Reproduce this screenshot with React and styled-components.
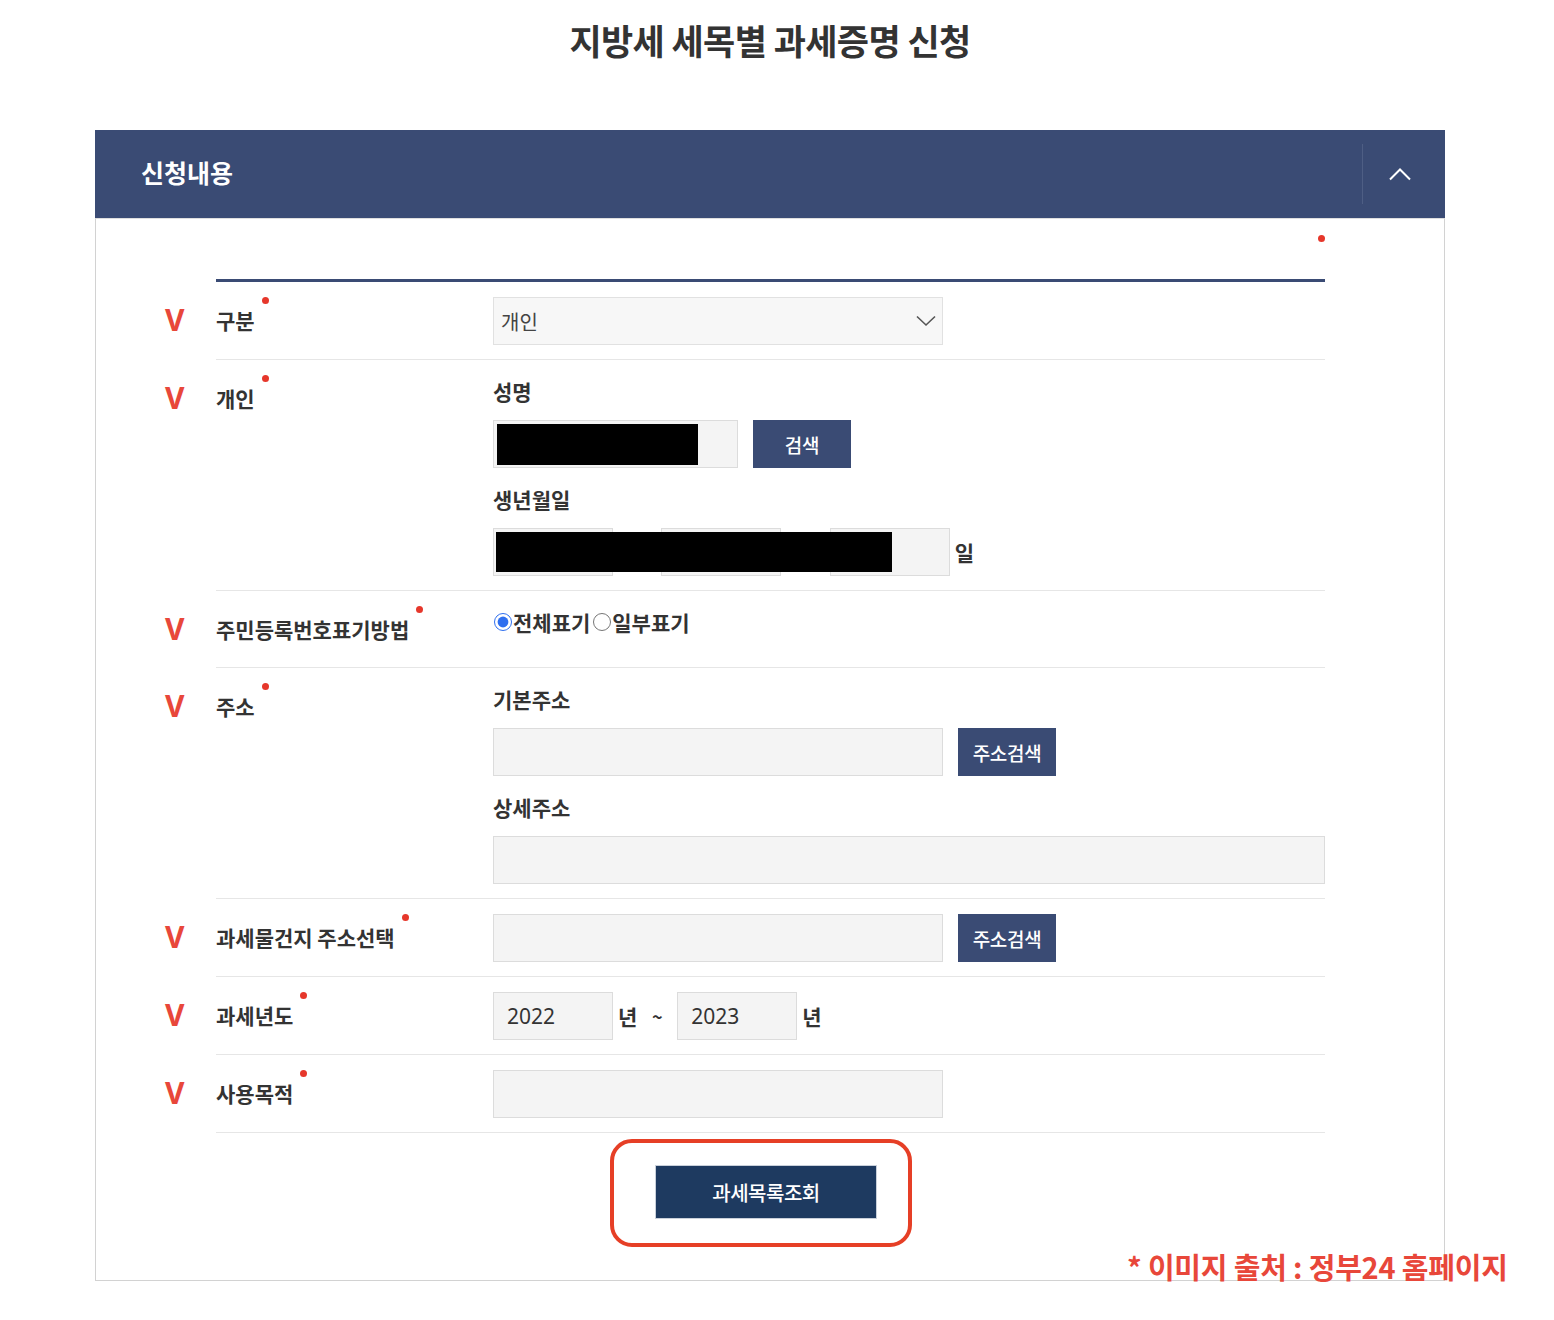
import React from "react";
import styled, { createGlobalStyle } from "styled-components";

const Global = createGlobalStyle`
  html, body { margin: 0; padding: 0; background: #fff; }
  body { font-family: "Noto Sans CJK KR", "Noto Sans", sans-serif; color: #333; }
  * { box-sizing: border-box; }
`;

const Page = styled.div`
  position: relative;
  width: 1554px;
  height: 1320px;
  padding: 18px 0 0 95px;
`;

const Container = styled.div`
  width: 1350px;
`;

const Title = styled.h1`
  margin: 0;
  font-size: 35px;
  line-height: 44px;
  font-weight: 700;
  letter-spacing: -0.6px;
  color: #333;
  text-align: center;
`;

const Panel = styled.section`
  margin-top: 68px;
`;

const Header = styled.div`
  height: 88px;
  background: #3a4b74;
  display: flex;
  align-items: center;
  justify-content: space-between;
  padding-left: 46px;
`;

const HeaderTitle = styled.h2`
  margin: 0 0 5px;
  color: #fff;
  font-size: 25px;
  font-weight: 700;
  letter-spacing: 0;
`;

const Toggle = styled.div`
  width: 83px;
  height: 60px;
  border-left: 1px solid #4e5e84;
  display: flex;
  align-items: center;
  justify-content: center;
  padding-right: 8px;
`;

const Body = styled.div`
  border: 1px solid #d2d2d2;
  border-top-color: #dedede;
  padding: 0 119px 61px 0;
`;

const Legend = styled.div`
  height: 60px;
  padding: 16px 0 0 120px;
  display: flex;
  justify-content: flex-end;
`;

const Dot = styled.span`
  display: inline-block;
  width: 7px;
  height: 7px;
  border-radius: 50%;
  background: #e6372b;
  vertical-align: top;
  margin: ${(p) => (p.$inline ? "1px 0 0 7px" : "0")};
`;

const TopRule = styled.div`
  margin-left: 120px;
  height: 3px;
  background: #3a4b74;
`;

const Row = styled.div`
  display: grid;
  grid-template-columns: 120px 1fr;
`;

const Mark = styled.div`
  padding: 14px 0 0 69px;
  line-height: 48px;
  font-family: "Noto Sans", sans-serif;
  font-size: 30px;
  font-weight: 700;
  color: #e8473a;
`;

const RowBody = styled.div`
  display: grid;
  grid-template-columns: 277px 1fr;
  padding: 15px 0 14px;
  border-bottom: 1px solid #e6e6e6;
`;

const Label = styled.div`
  line-height: 48px;
  font-size: 21px;
  font-weight: 700;
  color: #333;
  white-space: nowrap;
  margin-top: -1px;
`;

const Value = styled.div`
  display: flex;
  flex-direction: column;
  align-items: flex-start;
`;

const Sub = styled.div`
  line-height: 32px;
  font-size: 21px;
  font-weight: 700;
  color: #333;
  margin-top: ${(p) => (p.$first ? "0" : "15px")};
  margin-bottom: 13px;
`;

const Line = styled.div`
  position: relative;
  display: flex;
  align-items: center;
  width: ${(p) => (p.$full ? "100%" : "auto")};
`;

const Field = styled.div`
  position: relative;
  flex: none;
  width: ${(p) => p.$w || "450px"};
  height: 48px;
  background: #f4f4f4;
  border: 1px solid #dcdcdc;
  display: flex;
  align-items: center;
  padding-left: 13px;
  font-family: "Noto Sans", "Noto Sans CJK KR", sans-serif;
  font-size: 21px;
  color: #333;
`;

const Select = styled.div`
  width: 450px;
  height: 48px;
  background: #f7f7f7;
  border: 1px solid #e1e1e1;
  display: flex;
  align-items: center;
  justify-content: space-between;
  padding: 0 6px 0 7px;
  font-size: 20px;
  font-weight: 400;
  color: #444;
`;

const Btn = styled.button`
  flex: none;
  width: 98px;
  height: 48px;
  margin-left: 15px;
  border: 0;
  background: #3a4b74;
  color: #fff;
  font-family: "Noto Sans CJK KR", sans-serif;
  font-size: 19px;
  font-weight: 500;
  letter-spacing: -0.3px;
  padding: 0;
`;

const Unit = styled.span`
  flex: none;
  margin: ${(p) => p.$m || "0 0 0 5px"};
  font-size: 21px;
  font-weight: 700;
  color: #333;
`;

const Tilde = styled.span`
  flex: none;
  width: 40px;
  text-align: center;
  font-size: 18px;
  font-weight: 700;
  color: #333;
`;

const Redact = styled.div`
  position: absolute;
  left: 3px;
  top: 3px;
  width: ${(p) => p.$w};
  height: ${(p) => p.$h};
  background: #000;
`;

const Radios = styled.div`
  display: flex;
  align-items: center;
  height: 32px;
  font-size: 21px;
  font-weight: 700;
  color: #333;
`;

const RadioItem = styled.label`
  display: flex;
  align-items: center;
  margin-right: 2px;
  input {
    width: 18px;
    height: 18px;
    margin: 0 1px 0 1px;
    accent-color: #2f6fef;
  }
`;

const Actions = styled.div`
  display: flex;
  justify-content: center;
  padding: 32px 0 0 120px;
`;

const SubmitWrap = styled.div`
  position: relative;
  margin-left: -9px;
`;

const Submit = styled.button`
  width: 222px;
  height: 54px;
  background: #1e3a60;
  border: 1px solid #c9d0da;
  color: #fff;
  font-family: "Noto Sans CJK KR", sans-serif;
  font-size: 20px;
  font-weight: 500;
  letter-spacing: -0.5px;
`;

const Highlight = styled.div`
  position: absolute;
  left: -45px;
  top: -26px;
  width: 302px;
  height: 108px;
  border: 4px solid #e63f26;
  border-radius: 22px;
  pointer-events: none;
`;

const Source = styled.div`
  position: absolute;
  left: 1127px;
  top: 1245px;
  font-size: 29px;
  font-weight: 700;
  letter-spacing: -0.2px;
  color: #e8473a;
  white-space: nowrap;
`;

const ChevronUp = () => (
  <svg width="22" height="14" viewBox="0 0 22 14" fill="none">
    <path d="M1 12.5L11 2.5L21 12.5" stroke="#fff" strokeWidth="2" />
  </svg>
);

const ChevronDown = () => (
  <svg width="20" height="12" viewBox="0 0 20 12" fill="none">
    <path d="M1 1.5L10 10L19 1.5" stroke="#555" strokeWidth="1.6" />
  </svg>
);

const FormRow = ({ label, children }) => (
  <Row>
    <Mark>V</Mark>
    <RowBody>
      <Label>
        {label}
        <Dot $inline />
      </Label>
      <Value>{children}</Value>
    </RowBody>
  </Row>
);

export default function App() {
  return (
    <Page>
      <Global />
      <Container>
        <Title>지방세 세목별 과세증명 신청</Title>
        <Panel>
          <Header>
            <HeaderTitle>신청내용</HeaderTitle>
            <Toggle>
              <ChevronUp />
            </Toggle>
          </Header>
          <Body>
            <Legend>
              <Dot />
            </Legend>
            <TopRule />
            <FormRow label="구분">
              <Select>
                <span>개인</span>
                <ChevronDown />
              </Select>
            </FormRow>
            <FormRow label="개인">
              <Sub $first>성명</Sub>
              <Line>
                <Field $w="245px">
                  <Redact $w="201px" $h="41px" />
                </Field>
                <Btn>검색</Btn>
              </Line>
              <Sub>생년월일</Sub>
              <Line>
                <Field $w="120px" />
                <Unit $m="0 24px 0 5px">년</Unit>
                <Field $w="120px" />
                <Unit $m="0 24px 0 5px">월</Unit>
                <Field $w="120px" />
                <Unit>일</Unit>
                <Redact $w="396px" $h="40px" style={{ top: 4 }} />
              </Line>
            </FormRow>
            <FormRow label="주민등록번호표기방법">
              <Radios>
                <RadioItem>
                  <input type="radio" name="rrn" defaultChecked />
                  전체표기
                </RadioItem>
                <RadioItem>
                  <input type="radio" name="rrn" />
                  일부표기
                </RadioItem>
              </Radios>
            </FormRow>
            <FormRow label="주소">
              <Sub $first>기본주소</Sub>
              <Line>
                <Field $w="450px" />
                <Btn>주소검색</Btn>
              </Line>
              <Sub>상세주소</Sub>
              <Line $full>
                <Field $w="100%" />
              </Line>
            </FormRow>
            <FormRow label="과세물건지 주소선택">
              <Line>
                <Field $w="450px" />
                <Btn>주소검색</Btn>
              </Line>
            </FormRow>
            <FormRow label="과세년도">
              <Line>
                <Field $w="120px">2022</Field>
                <Unit>년</Unit>
                <Tilde>~</Tilde>
                <Field $w="120px">2023</Field>
                <Unit>년</Unit>
              </Line>
            </FormRow>
            <FormRow label="사용목적">
              <Line>
                <Field $w="450px" />
              </Line>
            </FormRow>
            <Actions>
              <SubmitWrap>
                <Submit>과세목록조회</Submit>
                <Highlight />
              </SubmitWrap>
            </Actions>
          </Body>
        </Panel>
      </Container>
      <Source>* 이미지 출처 : 정부24 홈페이지</Source>
    </Page>
  );
}
